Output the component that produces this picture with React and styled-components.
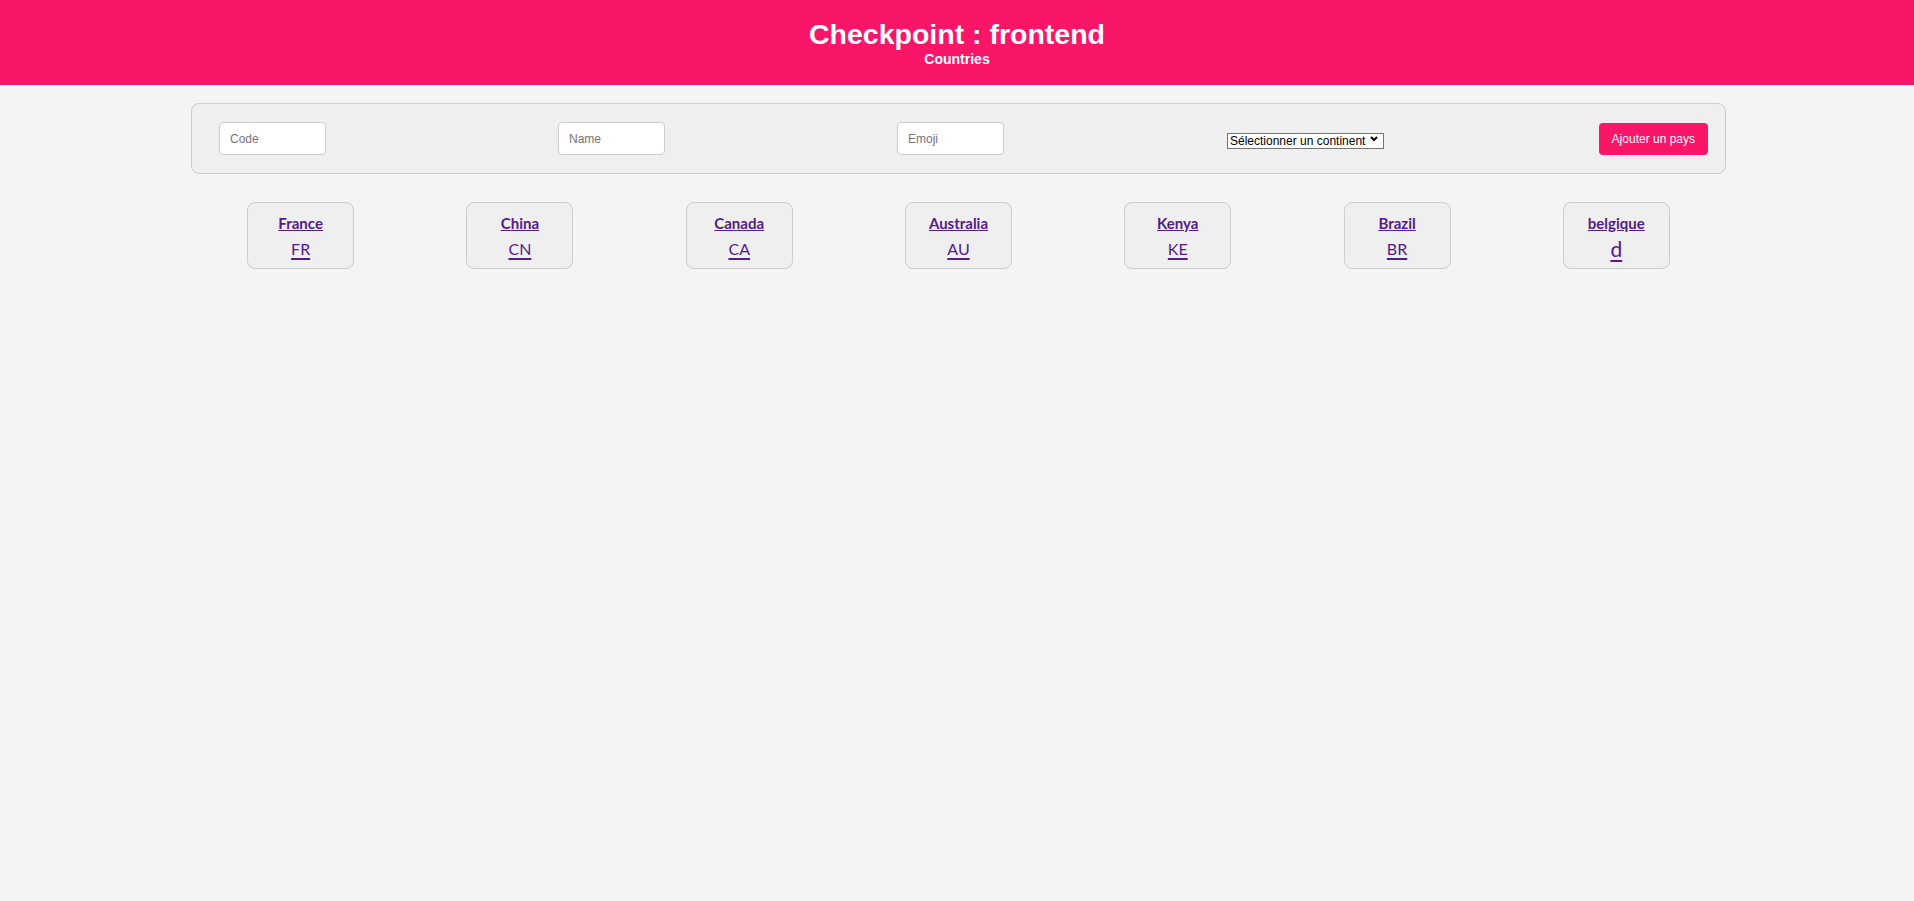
import styled, { createGlobalStyle } from "styled-components";

const GlobalStyle = createGlobalStyle`
  body {
    margin: 0;
    background: #f4f4f4;
    font-family: "Liberation Sans", Arial, sans-serif;
  }
`;

const Header = styled.header`
  height: 85px;
  box-sizing: border-box;
  padding-top: 19.5px;
  background: #f91669;
  color: #fff;
  text-align: center;
`;

const Title = styled.h1`
  margin: 0;
  font-size: 28.5px;
  line-height: 29px;
  font-weight: 700;
`;

const Subtitle = styled.div`
  margin-top: 2.6px;
  font-size: 14px;
  line-height: 16px;
  font-weight: 700;
`;

const Main = styled.main`
  margin: 18px 188px 0 191px;
`;

// form bar
const Form = styled.form`
  height: 71px;
  box-sizing: border-box;
  display: grid;
  grid-template-columns: 339px 339px 330px 1fr auto;
  align-items: center;
  padding: 0 17px 0 27px;
  background: #efefef;
  border: 1px solid #ccc;
  border-radius: 8px;
`;

const Input = styled.input`
  width: 107px;
  height: 33px;
  box-sizing: border-box;
  padding: 0 10px;
  border: 1px solid #ccc;
  border-radius: 4px;
  background: #fff;
  font-family: "Liberation Sans", Arial, sans-serif;
  font-size: 12px;
  outline: none;

  &::placeholder {
    color: #757575;
  }
`;

const SelectWrap = styled.span`
  position: relative;
  display: inline-block;
  width: 157px;
  height: 16px;
  justify-self: start;
`;

const Select = styled.select`
  appearance: none;
  width: 100%;
  height: 16px;
  box-sizing: border-box;
  margin: 0;
  padding: 0 0 0 2px;
  border: 1px solid #767676;
  border-radius: 0;
  background: #fff;
  color: #000;
  font-family: "Liberation Sans", Arial, sans-serif;
  font-size: 12px;
  line-height: 14px;
`;

const Chevron = styled.svg`
  position: absolute;
  right: 6px;
  top: 5px;
  pointer-events: none;
`;

const Button = styled.button`
  height: 32px;
  padding: 0 13px;
  border: none;
  border-radius: 4px;
  background: #f91669;
  color: #fff;
  font-family: "Liberation Sans", Arial, sans-serif;
  font-size: 12px;
  cursor: pointer;
`;

// country cards
const CardRow = styled.div`
  display: flex;
  justify-content: space-around;
  margin-top: 28px;
`;

const Card = styled.a`
  width: 107px;
  height: 67px;
  box-sizing: border-box;
  display: flex;
  flex-direction: column;
  align-items: center;
  padding-top: 11px;
  background: #efefef;
  border: 1px solid #ccc;
  border-radius: 8px;
  text-decoration: none;
  font-family: Lato, "Noto Sans", sans-serif;
  color: #551a8b;
`;

const Name = styled.span`
  font-size: 15px;
  line-height: 18px;
  font-weight: 700;
  text-decoration: underline;
  text-underline-offset: 1px;
`;

const Code = styled.span`
  margin-top: 6px;
  font-size: ${(p) => p.$size || 16}px;
  line-height: 22px;
  text-decoration: underline;
  text-decoration-thickness: 2px;
  text-underline-offset: 3px;
`;

const countries = [
  { name: "France", code: "FR" },
  { name: "China", code: "CN" },
  { name: "Canada", code: "CA" },
  { name: "Australia", code: "AU" },
  { name: "Kenya", code: "KE" },
  { name: "Brazil", code: "BR" },
  { name: "belgique", code: "d", size: 21 },
];

export default function App() {
  return (
    <>
      <GlobalStyle />
      <Header>
        <Title>Checkpoint : frontend</Title>
        <Subtitle>Countries</Subtitle>
      </Header>
      <Main>
        <Form onSubmit={(e) => e.preventDefault()}>
          <Input placeholder="Code" />
          <Input placeholder="Name" />
          <Input placeholder="Emoji" />
          <SelectWrap>
            <Select defaultValue="">
              <option value="">Sélectionner un continent</option>
              <option value="EU">Europe</option>
              <option value="AS">Asia</option>
            </Select>
            <Chevron width="8" height="6" viewBox="0 0 8 6">
              <path d="M1 1l3 3 3-3" fill="none" stroke="#000" strokeWidth="2" />
            </Chevron>
          </SelectWrap>
          <Button type="submit">Ajouter un pays</Button>
        </Form>
        <CardRow>
          {countries.map((c) => (
            <Card key={c.name} href="#">
              <Name>{c.name}</Name>
              <Code $size={c.size}>{c.code}</Code>
            </Card>
          ))}
        </CardRow>
      </Main>
    </>
  );
}
